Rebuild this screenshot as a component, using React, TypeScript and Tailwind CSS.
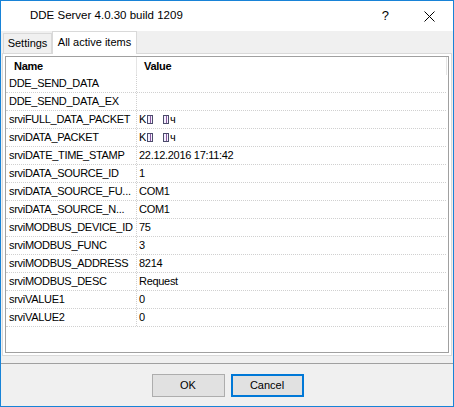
import React from "react";

const Box = () => (
  <span className="inline-flex h-[9px] w-[6px] items-stretch justify-center border border-[#4b4b6b] bg-[#f4f0ff] align-middle">
    <span className="w-px bg-[#8a5aa0]" />
  </span>
);

const Garble = () => (
  <span className="inline-flex items-center">
    <span>K</span>
    <span className="ml-[1px] inline-flex">
      <Box />
    </span>
    <span className="ml-[10px] inline-flex">
      <Box />
    </span>
    <span className="ml-[1px]">ч</span>
  </span>
);

const rows: [string, React.ReactNode][] = [
  ["DDE_SEND_DATA", ""],
  ["DDE_SEND_DATA_EX", ""],
  ["srviFULL_DATA_PACKET", <Garble />],
  ["srviDATA_PACKET", <Garble />],
  ["srviDATE_TIME_STAMP", "22.12.2016 17:11:42"],
  ["srviDATA_SOURCE_ID", "1"],
  ["srviDATA_SOURCE_FU...", "COM1"],
  ["srviDATA_SOURCE_N...", "COM1"],
  ["srviMODBUS_DEVICE_ID", "75"],
  ["srviMODBUS_FUNC", "3"],
  ["srviMODBUS_ADDRESS", "8214"],
  ["srviMODBUS_DESC", "Request"],
  ["srviVALUE1", "0"],
  ["srviVALUE2", "0"],
];

export default function App() {
  return (
    <div
      className="flex h-[407px] w-[454px] flex-col border border-[#1883d7] bg-[#f0f0f0] text-black"
      style={{ fontFamily: '"Liberation Sans", Arial, sans-serif' }}
    >
      {/* Title bar */}
      <div className="flex h-[30px] items-center bg-white">
        <div className="pl-[29px] text-[11.5px]">DDE Server 4.0.30 build 1209</div>
        <div className="ml-auto flex items-center">
          <span className="mr-[35px] text-[13px]">?</span>
          <svg width="11" height="11" viewBox="0 0 11 11" className="mr-[18px]">
            <path d="M0.5 0.5 L10.5 10.5 M10.5 0.5 L0.5 10.5" stroke="#000" strokeWidth="1" fill="none" />
          </svg>
        </div>
      </div>

      {/* Tabs */}
      <div className="flex h-[22px] items-end pl-[2px]">
        <div className="flex h-[20px] w-[49px] items-center justify-center border border-b-0 border-[#d9d9d9] bg-[#f0f0f0] text-[11px]">
          Settings
        </div>
        <div className="relative z-10 -mb-px flex h-[23px] w-[85px] items-center justify-center border border-b-0 border-[#d9d9d9] bg-white pb-[2px] text-[11px]">
          All active items
        </div>
      </div>

      {/* Panel */}
      <div className="mx-px h-[303px] border border-[#d9d9d9] bg-white p-[2px]">
        <div className="h-full border border-[#a0a0a0] bg-white text-[11px] tracking-[-0.3px]">
          {/* Header */}
          <div className="flex h-[18px] w-[441px] items-center font-bold">
            <div className="h-full w-[131px] border-r border-[#e5e5e5] pl-[8px] leading-[18px]">Name</div>
            <div className="h-full w-[310px] border-r border-[#e5e5e5] pl-[7px] leading-[18px]">Value</div>
          </div>
          {rows.map(([name, value], i) => (
            <div key={i} className="flex h-[18px] w-[440px] border-b border-dotted border-[#d0d0d0]">
              <div className="w-[131px] overflow-hidden whitespace-nowrap border-r border-dotted border-[#d0d0d0] pl-[3px] leading-[17px]">
                {name}
              </div>
              <div className="flex flex-1 items-center whitespace-nowrap pl-[2px] leading-[17px]">{value}</div>
            </div>
          ))}
        </div>
      </div>

      {/* Separator */}
      <div className="mt-[7px] h-px bg-[#a0a0a0]" />

      {/* Buttons */}
      <div className="mt-[10px] flex justify-center gap-[6px] pl-px text-[11px]">
        <button className="flex h-[23px] w-[73px] items-center justify-center border border-[#adadad] bg-[#e1e1e1]">
          OK
        </button>
        <button className="flex h-[23px] w-[73px] items-center justify-center border-2 border-[#0078d7] bg-[#e1e1e1]">
          Cancel
        </button>
      </div>
    </div>
  );
}
